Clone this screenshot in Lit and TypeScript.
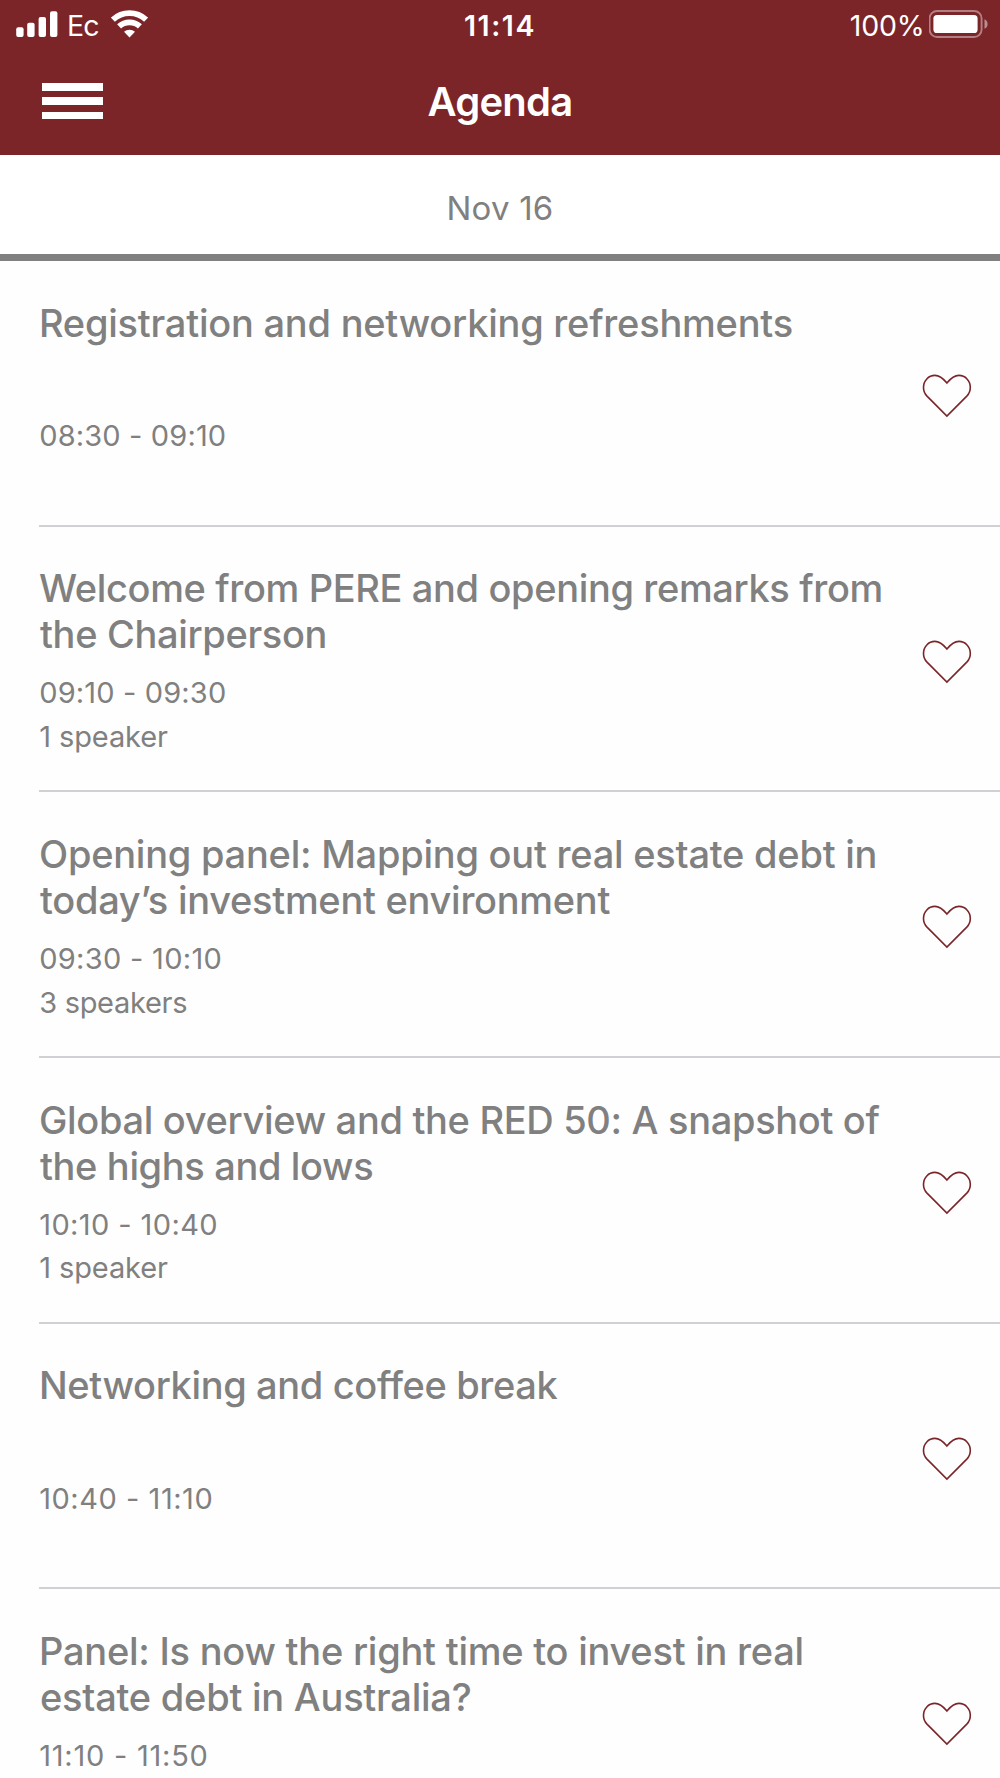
import { LitElement, html, css } from "lit";
import { customElement, property } from "lit/decorators.js";
import { classMap } from "lit/directives/class-map.js";
import { styleMap } from "lit/directives/style-map.js";

/** One line of text with the tracking (in px) that sets its measure. */
interface Line {
  text: string;
  tracking: number;
}

interface Session {
  title: Line[];
  time: Line;
  speakers?: Line;
}

const line = (text: string, tracking: number): Line => ({ text, tracking });

const SESSIONS: Session[] = [
  {
    title: [line("Registration and networking refreshments", -0.229)],
    time: line("08:30 - 09:10", 0.15),
  },
  {
    title: [
      line("Welcome from PERE and opening remarks from", -0.36),
      line("the Chairperson", -0.34),
    ],
    time: line("09:10 - 09:30", 0.15),
    speakers: line("1 speaker", -0.1),
  },
  {
    title: [
      line("Opening panel: Mapping out real estate debt in", -0.24),
      line("today’s investment environment", -0.28),
    ],
    time: line("09:30 - 10:10", 0.3),
    speakers: line("3 speakers", -0.3),
  },
  {
    title: [
      line("Global overview and the RED 50: A snapshot of", -0.321),
      line("the highs and lows", -0.35),
    ],
    time: line("10:10 - 10:40", 0.4),
    speakers: line("1 speaker", -0.1),
  },
  {
    title: [line("Networking and coffee break", -0.36)],
    time: line("10:40 - 11:10", 0.53),
  },
  {
    title: [
      line("Panel: Is now the right time to invest in real", -0.24),
      line("estate debt in Australia?", -0.24),
    ],
    time: line("11:10 - 11:50", 0.762),
  },
];

@customElement("status-bar")
class StatusBar extends LitElement {
  static styles = css`
    :host {
      display: grid;
      grid-template-columns: 1fr auto 1fr;
      align-items: center;
      height: 50.6px;
      padding: 0 11px 0 16px;
      color: #fff;
      font-size: 28.5px;
      line-height: 36px;
    }
    .left,
    .right {
      display: flex;
      align-items: center;
    }
    .right {
      justify-content: flex-end;
    }
    .carrier {
      margin-left: 9px;
      letter-spacing: -0.8px;
    }
    .wifi {
      margin-left: 12px;
    }
    .clock {
      font-weight: 600;
      letter-spacing: 1.6px;
      margin-right: 5px;
    }
    .carrier,
    .clock,
    .percent {
      padding-top: 2px;
    }
    .percent {
      margin-right: 4.5px;
      letter-spacing: -0.2px;
    }
    svg {
      display: block;
    }
    .signal,
    .wifi,
    .battery {
      margin-bottom: 2.6px;
    }
  `;

  render() {
    return html`
      <div class="left">
        <svg class="signal" width="42" height="28" viewBox="0 0 42 28" fill="#fff">
          <rect x="0.2" y="17.3" width="7.4" height="9.8" rx="2" />
          <rect x="11.2" y="12.8" width="7.4" height="14.3" rx="2" />
          <rect x="22.6" y="7" width="7.4" height="20.1" rx="2" />
          <rect x="34" y="1.2" width="7.4" height="25.9" rx="2" />
        </svg>
        <span class="carrier">Ec</span>
        <svg class="wifi" width="37" height="28" viewBox="0 0 37 28">
          <g fill="none" stroke="#fff" stroke-width="5.8">
            <path d="M1.9 9.7A24.3 24.3 0 0 1 35.1 9.7" />
            <path d="M8.1 16.4A15.3 15.3 0 0 1 28.9 16.4" />
          </g>
          <path fill="#fff" d="M13 21.8A8.2 8.2 0 0 1 24 21.8L18.5 27.4Z" />
        </svg>
      </div>
      <div class="clock">11:14</div>
      <div class="right">
        <span class="percent">100%</span>
        <svg class="battery" width="60" height="28" viewBox="0 0 60 28">
          <rect x="0.6" y="1" width="52" height="26" rx="7.5" fill="none" stroke="#fff" stroke-opacity="0.42" stroke-width="1.9" />
          <rect x="4.4" y="5" width="44.2" height="18" rx="3.6" fill="#fff" />
          <path d="M55.5 9.2Q58.6 10.6 58.6 14T55.5 18.8Z" fill="#fff" fill-opacity="0.48" />
        </svg>
      </div>
    `;
  }
}

@customElement("session-row")
class SessionRow extends LitElement {
  @property({ attribute: false }) session!: Session;

  static styles = css`
    :host {
      display: flex;
      box-sizing: border-box;
      height: 265.67px;
      margin-left: 38.7px;
      padding-right: 28px;
      border-bottom: 2.4px solid #d1d1d5;
      color: #808080;
    }
    .copy {
      flex: 1;
      padding-top: 38.6px;
      white-space: nowrap;
    }
    .title {
      padding-left: 0.3px;
      font-size: 38px;
      font-weight: 500;
      line-height: 46px;
    }
    .title > div + div {
      padding-left: 1px;
    }
    .meta {
      margin-top: 14.2px;
      padding-left: 0.5px;
      font-size: 29px;
      line-height: 43.6px;
    }
    .solo {
      margin-top: 68.5px;
    }
    .favorite {
      align-self: center;
      display: block;
      margin-top: 6.4px;
      padding: 0;
      border: 0;
      background: none;
    }
    svg {
      display: block;
    }
  `;

  private line(l: Line) {
    return html`<div style=${styleMap({ letterSpacing: `${l.tracking}px` })}>${l.text}</div>`;
  }

  render() {
    const { title, time, speakers } = this.session;
    return html`
      <div class="copy">
        <div class="title">${title.map((l) => this.line(l))}</div>
        <div class=${classMap({ meta: true, solo: title.length === 1 })}>
          ${this.line(time)}${speakers ? this.line(speakers) : null}
        </div>
      </div>
      <button class="favorite" aria-label="Favorite">
        <svg width="50" height="44" viewBox="0 0 50 44" fill="none" stroke="#7b2528" stroke-width="1.6">
          <path
            d="M24.9 9C21.5 4.9 17.5 1.4 12.9 1.4C6.5 1.4 1.5 6.8 1.5 13.4C1.5 17.2 2.8 19.8 5 22.1L24.9 42L44.8 22.1C47 19.8 48.3 17.2 48.3 13.4C48.3 6.8 43.3 1.4 36.9 1.4C32.3 1.4 28.3 4.9 24.9 9Z"
          />
        </svg>
      </button>
    `;
  }
}

@customElement("app-root")
class AppRoot extends LitElement {
  static styles = css`
    :host {
      display: block;
      height: 1778px;
      overflow: hidden;
      background: #fefefe;
      font-family: Inter, "Liberation Sans", sans-serif;
    }
    .header {
      box-sizing: border-box;
      height: 154.67px;
      background: #7b2528;
    }
    .nav {
      display: grid;
      grid-template-columns: 1fr auto 1fr;
      align-items: center;
      height: 101px;
      padding: 0 42px;
    }
    .menu {
      display: grid;
      gap: 6.8px;
      width: 61px;
      padding: 0;
      border: 0;
      background: none;
    }
    .bar {
      height: 7.5px;
      background: #fff;
    }
    .heading {
      margin: 0;
      padding-top: 2px;
      color: #fff;
      font-size: 40px;
      font-weight: 600;
      line-height: 48px;
      letter-spacing: -0.75px;
    }
    .date {
      display: flex;
      justify-content: center;
      align-items: center;
      box-sizing: border-box;
      height: 106.4px;
      padding-top: 8px;
      border-bottom: 7.4px solid #808080;
      background: #fff;
      color: #808080;
      font-size: 33px;
      letter-spacing: 0.2px;
    }
  `;

  render() {
    return html`
      <div class="header">
        <status-bar></status-bar>
        <div class="nav">
          <button class="menu" aria-label="Menu">
            <span class="bar"></span><span class="bar"></span><span class="bar"></span>
          </button>
          <h1 class="heading">Agenda</h1>
        </div>
      </div>
      <div class="date">Nov 16</div>
      ${SESSIONS.map((s) => html`<session-row .session=${s}></session-row>`)}
    `;
  }
}
